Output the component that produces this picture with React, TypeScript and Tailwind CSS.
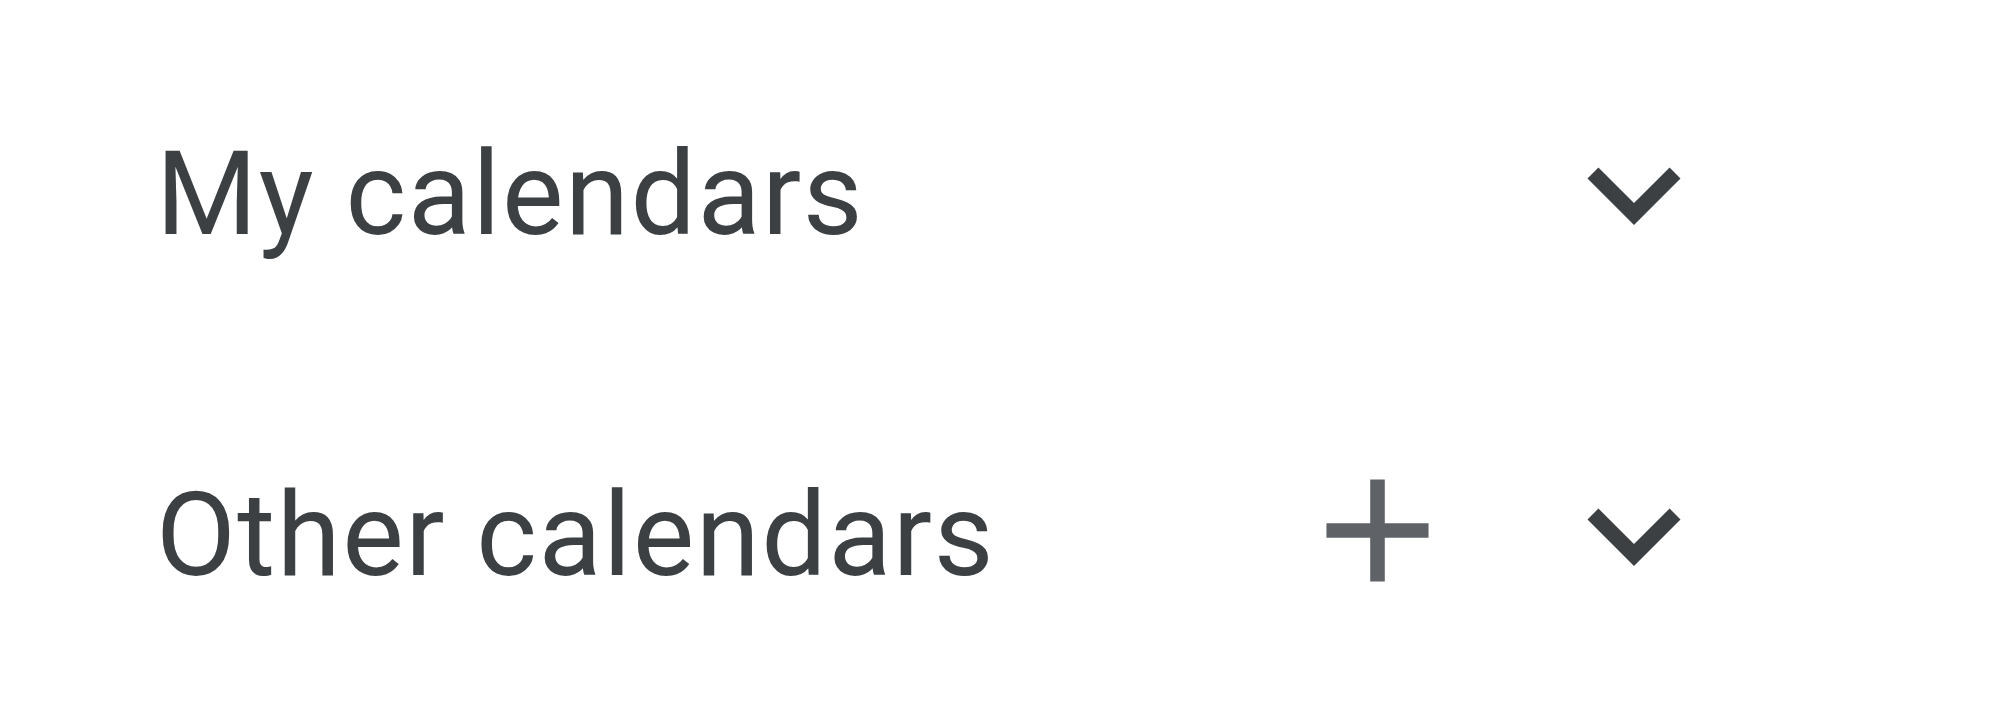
import React from "react";

function Chevron() {
  return (
    <svg viewBox="0 0 24 24" className="w-[186px] h-[186px] shrink-0" fill="#3c4043">
      <path d="M16.59 8.59L12 13.17 7.41 8.59 6 10l6 6 6-6z" />
    </svg>
  );
}

function Plus() {
  return (
    <svg viewBox="0 0 24 24" className="w-[175px] h-[175px] shrink-0 mb-[8px]" fill="#5f6368">
      <path d="M19 13h-6v6h-2v-6H5v-2h6V5h2v6h6v2z" />
    </svg>
  );
}

function Row({ label, add }: { label: string; add?: boolean }) {
  return (
    <div className="flex h-[341px] items-center justify-between">
      <span className="text-[116px] leading-none font-normal tracking-[1.5px] text-[#3c4043] font-['Roboto',sans-serif] whitespace-nowrap">
        {label}
      </span>
      <div className="flex items-center gap-[76px]">
        {add && <Plus />}
        <Chevron />
      </div>
    </div>
  );
}

export default function App() {
  return (
    <div className="w-[1999px] h-[716px] bg-white pt-[23px] pl-[156px] pr-[272px] overflow-hidden">
      <Row label="My calendars" />
      <Row label="Other calendars" add />
    </div>
  );
}
